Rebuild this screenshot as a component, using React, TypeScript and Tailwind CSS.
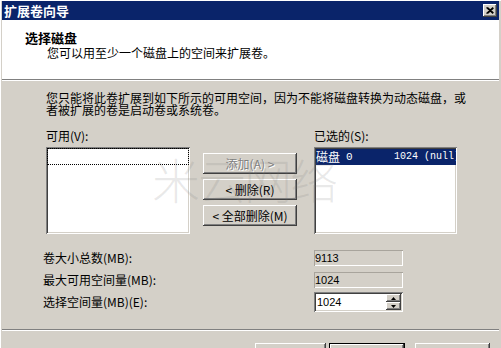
import React from "react";

const raised =
  "shadow-[inset_-1px_-1px_0_#404040,inset_1px_1px_0_#ffffff,inset_-2px_-2px_0_#808080,inset_2px_2px_0_#d4d0c8]";
const sunken =
  "shadow-[inset_1px_1px_0_#808080,inset_-1px_-1px_0_#ffffff,inset_2px_2px_0_#404040,inset_-2px_-2px_0_#d4d0c8]";

export default function App() {
  return (
    <div className="relative w-[501px] h-[348px] overflow-hidden bg-[#d4d0c8] font-['Noto_Sans_CJK_SC',sans-serif] text-[12px] leading-[12px] text-black pt-[1px] px-[2px] shadow-[inset_1px_1px_0_#ffffff]">
      {/* Title bar */}
      <div className="h-[19px] bg-[#0a246a] flex items-center justify-between pl-[2px] pr-[2px]">
        <span className="text-white font-bold text-[13px] leading-[13px]">扩展卷向导</span>
        <div className={`w-[14px] h-[13px] bg-[#d4d0c8] flex items-center justify-center ${raised}`}>
          <svg width="8" height="7" viewBox="0 0 8 7">
            <path d="M0.5 0.5 L7 6.5 M1.5 0.5 L7.5 6 M7 0.5 L0.5 6.5 M7.5 1 L1.5 6.5" stroke="#000" strokeWidth="1.1" />
          </svg>
        </div>
      </div>

      {/* Header */}
      <div className="h-[59px] bg-white pl-[23px] pt-[11px]">
        <div className="font-bold text-[13px] leading-[13px]">选择磁盘</div>
        <div className="mt-[3px] pl-[22px]">您可以用至少一个磁盘上的空间来扩展卷。</div>
      </div>
      <div className="h-px bg-[#808080]" />
      <div className="h-px bg-white" />

      {/* Body */}
      <div className="pl-[44px] pt-[11px]">
        <p className="leading-[12px]">
          您只能将此卷扩展到如下所示的可用空间，因为不能将磁盘转换为动态磁盘，或
          <br />
          者被扩展的卷是启动卷或系统卷。
        </p>

        <div className="mt-[14px] flex">
          <div className="w-[144px]">
            <div className="h-[12px]">可用(V):</div>
            <div className={`mt-[5px] h-[87px] bg-white p-[1px] ${sunken}`}>
              <div className="h-[17px] border border-dotted border-black" />
            </div>
          </div>

          <div className="ml-[13px] w-[94px] pt-[23px] flex flex-col gap-[5px]">
            <div className={`h-[21px] flex items-center justify-center text-[#808080] [text-shadow:1px_1px_0_#ffffff] ${raised}`}>
              添加(A) &gt;
            </div>
            <div className={`h-[21px] flex items-center justify-center ${raised}`}>&lt; 删除(R)</div>
            <div className={`h-[21px] flex items-center justify-center ${raised}`}>&lt; 全部删除(M)</div>
          </div>

          <div className="ml-[17px] w-[143px]">
            <div className="h-[12px]">已选的(S):</div>
            <div className={`mt-[5px] h-[87px] bg-white pt-[2px] pl-[2px] pr-[1px] overflow-hidden ${sunken}`}>
              <div className="h-[16px] bg-[#0a246a] text-white flex items-center whitespace-nowrap overflow-hidden">
                <span className="w-[78px] shrink-0 flex items-center">
                  磁盘<span className="ml-[6px] font-['Liberation_Mono',monospace] text-[11px]">0</span>
                </span>
                <span className="font-['Liberation_Mono',monospace] text-[10px]">1024 (null)</span>
              </div>
            </div>
          </div>
        </div>
      </div>

      {/* Sizes */}
      <div className="mt-[16px] pl-[41px] flex flex-col">
        <div className="flex items-center h-[16px]">
          <span className="w-[271px]">卷大小总数(MB):</span>
          <div className="w-[89px] h-[16px] flex items-center pl-[1px] shadow-[inset_1px_1px_0_#a8a49c,inset_-1px_-1px_0_#ffffff] font-['Liberation_Sans',sans-serif] text-[11px]">
            9113
          </div>
        </div>
        <div className="mt-[6px] flex items-center h-[16px]">
          <span className="w-[271px]">最大可用空间量(MB):</span>
          <div className="w-[89px] h-[16px] flex items-center pl-[1px] shadow-[inset_1px_1px_0_#a8a49c,inset_-1px_-1px_0_#ffffff] font-['Liberation_Sans',sans-serif] text-[11px]">
            1024
          </div>
        </div>
        <div className="mt-[4px] flex items-center h-[20px]">
          <span className="w-[271px]">选择空间量(MB)(E):</span>
          <div className={`w-[89px] h-[20px] bg-white flex items-center justify-between pl-[3px] pr-[2px] ${sunken}`}>
            <span className="font-['Liberation_Sans',sans-serif] text-[11px]">1024</span>
            <div className="flex flex-col w-[15px]">
              <div className={`h-[8px] bg-[#d4d0c8] flex items-center justify-center ${raised}`}>
                <svg width="5" height="3" viewBox="0 0 5 3"><path d="M2.5 0 L5 3 L0 3 Z" fill="#000" /></svg>
              </div>
              <div className={`h-[8px] bg-[#d4d0c8] flex items-center justify-center ${raised}`}>
                <svg width="5" height="3" viewBox="0 0 5 3"><path d="M0 0 L5 0 L2.5 3 Z" fill="#000" /></svg>
              </div>
            </div>
          </div>
        </div>
      </div>

      {/* Separator */}
      <div className="mt-[17px] h-px bg-[#808080]" />
      <div className="h-px bg-white" />

      {/* Bottom buttons */}
      <div className="mt-[12px] flex pl-[253px]">
        <div className={`w-[71px] h-[23px] flex items-center justify-center ${raised}`}>&lt; 上一步(B)</div>
        <div className="ml-[3px] w-[76px] h-[23px] border border-black">
          <div className={`h-full flex items-center justify-center ${raised}`}>下一步(N) &gt;</div>
        </div>
        <div className={`ml-[10px] w-[75px] h-[23px] flex items-center justify-center ${raised}`}>取消</div>
      </div>

      {/* Watermark */}
      <div className="pointer-events-none absolute left-[152px] top-[152px] text-[48px] leading-[52px] font-light text-[rgba(120,120,120,0.16)] whitespace-nowrap tracking-[-2px]">
        米云网络
      </div>
    </div>
  );
}
